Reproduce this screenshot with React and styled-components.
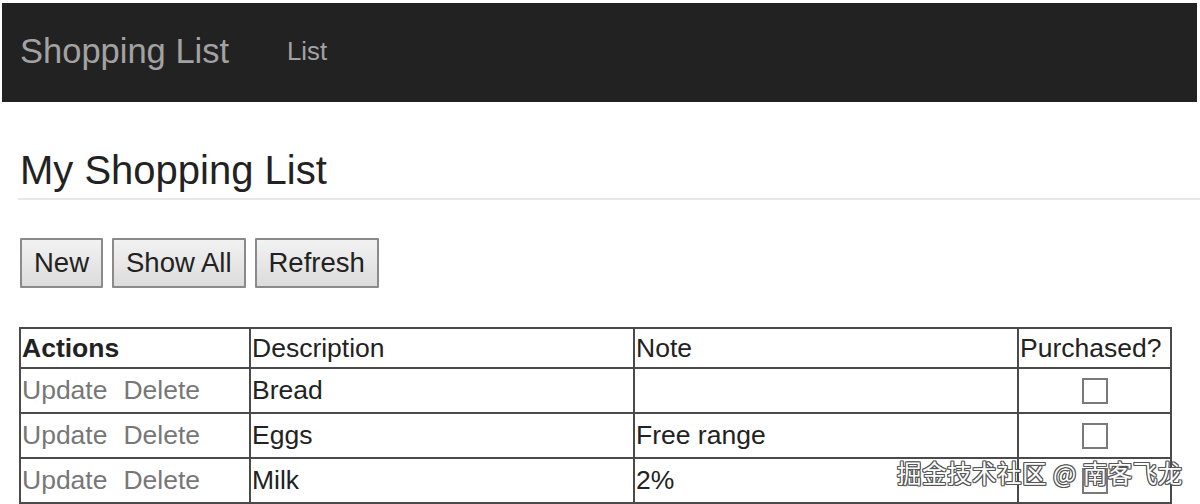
import React from "react";
import styled, { createGlobalStyle } from "styled-components";

const Global = createGlobalStyle`
  html, body { margin: 0; padding: 0; background: #fff; }
  body { font-family: "Liberation Sans", Arial, sans-serif; color: #222; }
  #root { width: 1200px; height: 504px; overflow: hidden; position: relative; }
`;

const Page = styled.div`
  width: 1200px;
  height: 504px;
  position: relative;
  overflow: hidden;
`;

const NavBar = styled.nav`
  margin: 3px 3px 0 2px;
  height: 99px;
  background: #222;
  display: flex;
  align-items: center;
  padding: 0 18px;
  gap: 58px;
`;

const Brand = styled.div`
  font-size: 34.5px;
  color: #a2a2a2;
  margin-top: -2px;
`;

const NavLink = styled.div`
  font-size: 25.7px;
  color: #a2a2a2;
  margin-top: -2px;
`;

const Content = styled.main`
  padding: 0 0 0 20px;
`;

const Title = styled.h1`
  margin: 0;
  padding-top: 45px;
  font-size: 40px;
  font-weight: normal;
  color: #222;
  line-height: 46px;
`;

const Rule = styled.hr`
  margin: 5px 0 0 -2px;
  border: 0;
  border-top: 2px solid #e8e8e8;
`;

const Toolbar = styled.div`
  display: flex;
  gap: 9px;
  margin-top: 38px;
`;

const Button = styled.button`
  font-family: "Liberation Sans", Arial, sans-serif;
  font-size: 27.5px;
  color: #222;
  height: 50px;
  padding: 0 12px;
  border: 2px solid #8a8a8a;
  border-radius: 1px;
  background: linear-gradient(#f2f2f2, #dcdcdc);
`;

const Table = styled.table`
  margin: 39px 0 0 -1px;
  border-collapse: collapse;
  font-size: 26.5px;
  table-layout: fixed;
  width: 1151px;
`;

const HeadCell = styled.th`
  border: 2px solid #4a4a4a;
  height: 38px;
  padding: 0 1px;
  text-align: left;
  font-weight: ${(p) => (p.$bold ? "bold" : "normal")};
  color: #222;
  white-space: nowrap;
`;

const Cell = styled.td`
  border: 2px solid #4a4a4a;
  height: 43px;
  padding: 0 1px;
  text-align: ${(p) => (p.$center ? "center" : "left")};
  color: #222;
  vertical-align: middle;
  white-space: nowrap;
`;

const ActionLink = styled.span`
  color: #777;
  margin-right: 16px;
`;

const Box = styled.span`
  display: inline-block;
  width: 22px;
  height: 22px;
  border: 2px solid #7a7a7a;
  background: #fff;
  vertical-align: middle;
  margin-top: -3px;
`;

const Watermark = styled.div`
  position: absolute;
  left: 897px;
  top: 455px;
  font-family: "Noto Sans CJK SC", "Liberation Sans", sans-serif;
  font-size: 24.5px;
  color: #fff;
  letter-spacing: 0.5px;
  text-shadow: 1px 0 #555, -1px 0 #555, 0 1px #555, 0 -1px #555,
    1px 1px #555, -1px -1px #555, 1px -1px #555, -1px 1px #555;
`;

const rows = [
  { desc: "Bread", note: "" },
  { desc: "Eggs", note: "Free range" },
  { desc: "Milk", note: "2%" },
];

export default function App() {
  return (
    <Page>
      <Global />
      <NavBar>
        <Brand>Shopping List</Brand>
        <NavLink>List</NavLink>
      </NavBar>
      <Content>
        <Title>My Shopping List</Title>
        <Rule />
        <Toolbar>
          <Button>New</Button>
          <Button>Show All</Button>
          <Button>Refresh</Button>
        </Toolbar>
        <Table>
          <colgroup>
            <col style={{ width: 230 }} />
            <col style={{ width: 384 }} />
            <col style={{ width: 384 }} />
            <col style={{ width: 153 }} />
          </colgroup>
          <thead>
            <tr>
              <HeadCell $bold>Actions</HeadCell>
              <HeadCell>Description</HeadCell>
              <HeadCell>Note</HeadCell>
              <HeadCell>Purchased?</HeadCell>
            </tr>
          </thead>
          <tbody>
            {rows.map((r) => (
              <tr key={r.desc}>
                <Cell>
                  <ActionLink>Update</ActionLink>
                  <ActionLink>Delete</ActionLink>
                </Cell>
                <Cell>{r.desc}</Cell>
                <Cell>{r.note}</Cell>
                <Cell $center>
                  <Box />
                </Cell>
              </tr>
            ))}
          </tbody>
        </Table>
      </Content>
      <Watermark>掘金技术社区 @ 南客飞龙</Watermark>
    </Page>
  );
}
